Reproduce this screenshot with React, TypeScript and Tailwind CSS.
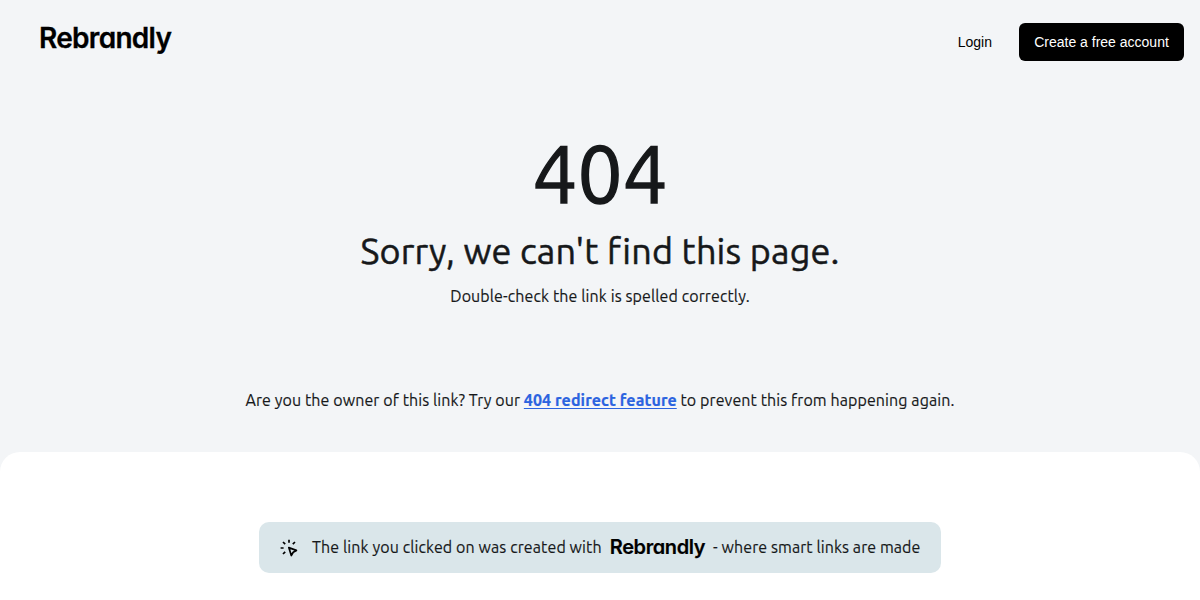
interface LogoProps {
  className: string;
}

function Logo({ className }: LogoProps) {
  return (
    <span
      className={`font-['Inter',sans-serif] font-semibold text-black whitespace-nowrap [font-feature-settings:'cv11'] ${className}`}
    >
      Rebrandly
    </span>
  );
}

function ClickIcon() {
  return (
    <svg
      className="w-[18px] h-[18px] shrink-0"
      viewBox="0 0 18 18"
      fill="none"
      stroke="#000"
      strokeWidth="1.7"
      strokeLinejoin="round"
    >
      <path d="M9 .8v3M3 3l2.2 2.2M15 3l-2.2 2.2M.6 9h3M5.2 12.8L3 15" />
      <path d="M8.8 8.6l7.6 2.8-3.2 1.9-1.9 3.2z" />
    </svg>
  );
}

function Header() {
  return (
    <header className="h-[84px] pl-10 pr-4 flex items-center justify-between">
      <Logo className="text-[28px] leading-[28px] tracking-[-0.7px] -mt-[9px] -ml-px [-webkit-text-stroke:0.3px_#000]" />
      <nav className="flex items-center gap-[27px] font-['Liberation_Sans',sans-serif] text-sm">
        <a href="#" className="text-black">Login</a>
        <a
          href="#"
          className="w-[165px] h-[38px] rounded-md bg-black text-white flex items-center justify-center whitespace-nowrap"
        >
          Create a free account
        </a>
      </nav>
    </header>
  );
}

export default function App() {
  return (
    <div className="h-[600px] overflow-hidden flex flex-col bg-[#f3f5f7] text-[#16181a] font-['Ubuntu','Noto_Sans',sans-serif] font-normal text-base">
      <Header />
      <main className="h-[368px] shrink-0 flex flex-col items-center text-center whitespace-nowrap">
        <h1 className="mt-[41px] text-[80px] leading-[96px] [-webkit-text-stroke:1.4px_#16181a]">404</h1>
        <h2 className="mt-[6px] text-[36px] leading-[48px] tracking-[0.17px] [-webkit-text-stroke:0.5px_#16181a]">Sorry, we can't find this page.</h2>
        <p className="mt-[9px] leading-6 tracking-[0.1px] [-webkit-text-stroke:0.15px_#16181a]">Double-check the link is spelled correctly.</p>
        <p className="mt-20 leading-6 tracking-[0.09px] [-webkit-text-stroke:0.15px_#16181a]">
          <span>Are you the owner of this link? Try our </span>
          <a href="#" className="font-bold text-[#2b63e0] underline underline-offset-2 [-webkit-text-stroke:0.2px_#2b63e0]">404 redirect feature</a>
          <span> to prevent this from happening again.</span>
        </p>
      </main>
      <footer className="flex-1 bg-white rounded-t-[20px] flex justify-center items-start pt-[70px]">
        <div className="w-[682px] h-[51px] rounded-[10px] bg-[#dae6ea] pl-[21px] flex items-center whitespace-nowrap">
          <ClickIcon />
          <span className="ml-[14px] -mt-[2px] tracking-[0.1px] [-webkit-text-stroke:0.15px_#16181a]">The link you clicked on was created with</span>
          <Logo className="ml-2 -mt-px text-[20px] leading-5 tracking-[-0.4px] [-webkit-text-stroke:0.2px_#000]" />
          <span className="ml-2 -mt-[2px] tracking-[0.08px] [-webkit-text-stroke:0.15px_#16181a]">- where smart links are made</span>
        </div>
      </footer>
    </div>
  );
}
